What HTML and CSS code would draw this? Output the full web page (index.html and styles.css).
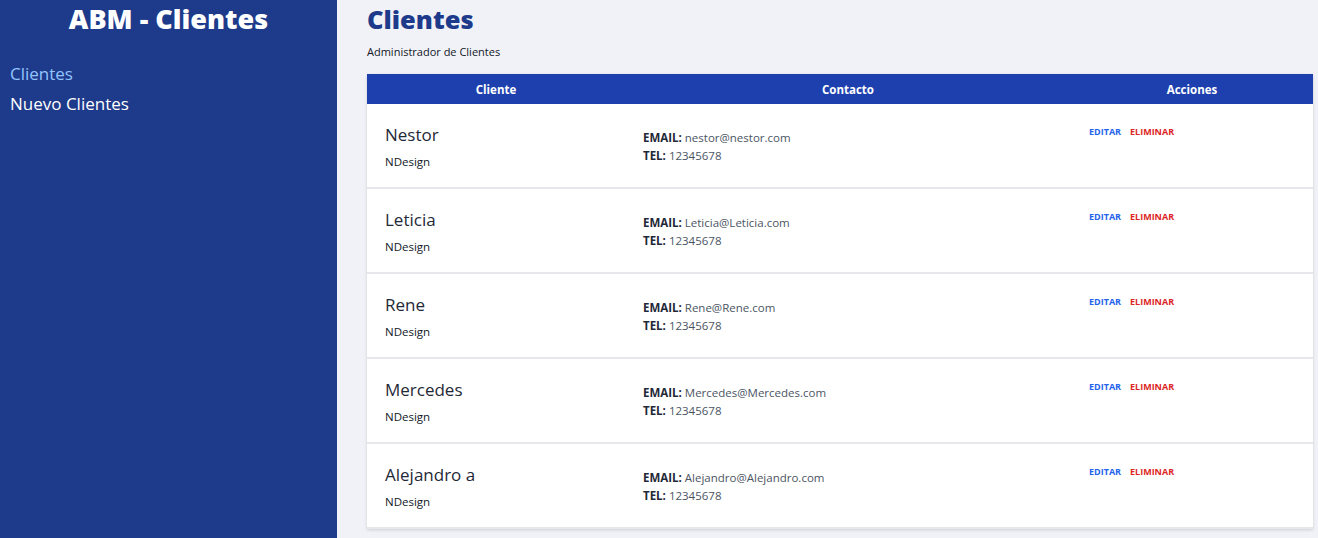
FILE: index.html
```html
<!DOCTYPE html>
<html lang="es">
<head>
<meta charset="utf-8">
<title>ABM - Clientes</title>
<link rel="stylesheet" href="styles.css">
</head>
<body>
<div class="layout">
  <aside class="sidebar">
    <h2 class="brand">ABM - Clientes</h2>
    <nav class="nav">
      <a class="nav-link active" href="#">Clientes</a>
      <a class="nav-link" href="#">Nuevo Clientes</a>
    </nav>
  </aside>
  <main class="main">
    <h1 class="title">Clientes</h1>
    <p class="subtitle">Administrador de Clientes</p>
    <table class="table">
      <thead>
        <tr><th class="c1">Cliente</th><th class="c2">Contacto</th><th class="c3">Acciones</th></tr>
      </thead>
      <tbody>
        <tr>
          <td><p class="name">Nestor</p><p class="company">NDesign</p></td>
          <td><p class="line"><b>EMAIL:</b> nestor@nestor.com</p><p class="line"><b>TEL:</b> 12345678</p></td>
          <td><div class="actions"><a class="act edit" href="#">EDITAR</a><a class="act del" href="#">ELIMINAR</a></div></td>
        </tr>
        <tr>
          <td><p class="name">Leticia</p><p class="company">NDesign</p></td>
          <td><p class="line"><b>EMAIL:</b> Leticia@Leticia.com</p><p class="line"><b>TEL:</b> 12345678</p></td>
          <td><div class="actions"><a class="act edit" href="#">EDITAR</a><a class="act del" href="#">ELIMINAR</a></div></td>
        </tr>
        <tr>
          <td><p class="name">Rene</p><p class="company">NDesign</p></td>
          <td><p class="line"><b>EMAIL:</b> Rene@Rene.com</p><p class="line"><b>TEL:</b> 12345678</p></td>
          <td><div class="actions"><a class="act edit" href="#">EDITAR</a><a class="act del" href="#">ELIMINAR</a></div></td>
        </tr>
        <tr>
          <td><p class="name">Mercedes</p><p class="company">NDesign</p></td>
          <td><p class="line"><b>EMAIL:</b> Mercedes@Mercedes.com</p><p class="line"><b>TEL:</b> 12345678</p></td>
          <td><div class="actions"><a class="act edit" href="#">EDITAR</a><a class="act del" href="#">ELIMINAR</a></div></td>
        </tr>
        <tr>
          <td><p class="name">Alejandro a</p><p class="company">NDesign</p></td>
          <td><p class="line"><b>EMAIL:</b> Alejandro@Alejandro.com</p><p class="line"><b>TEL:</b> 12345678</p></td>
          <td><div class="actions"><a class="act edit" href="#">EDITAR</a><a class="act del" href="#">ELIMINAR</a></div></td>
        </tr>
      </tbody>
    </table>
  </main>
</div>
</body>
</html>
```
FILE: styles.css
```css
* { box-sizing: border-box; }
html, body { margin: 0; padding: 0; height: 100%; }
body {
  font-family: "Open Sans", "Noto Sans", sans-serif;
  color: #111827;
  background: #f1f2f7;
  overflow: hidden;
}
.layout { display: flex; min-height: 538px; }
.sidebar {
  width: 337px;
  flex: none;
  background: #1e3a8a;
  min-height: 538px;
  padding: 0 10px;
}
.brand {
  margin: 0;
  padding-top: 3px;
  text-align: center;
  color: #fff;
  font-family: "Open Sans", sans-serif;
  font-weight: 800;
  font-size: 27px;
  line-height: 32px;
}
.nav { display: flex; flex-direction: column; margin-top: 24px; }
.nav-link {
  color: #fff;
  text-decoration: none;
  font-size: 17px;
  line-height: 30px;
}
.nav-link.active { color: #93c5fd; }
.main { flex: 1; padding: 0 5px 0 30px; }
.title {
  margin: 0;
  padding-top: 3px;
  font-family: "Open Sans", sans-serif;
  font-weight: 800;
  font-size: 25.5px;
  line-height: 32px;
  color: #1e3a8a;
}
.subtitle { margin: 9px 0 0; font-size: 11px; line-height: 16px; }
.table {
  margin-top: 14px;
  width: 100%;
  border-collapse: collapse;
  background: #fff;
  box-shadow: 0 1px 3px rgba(0,0,0,0.15);
}
.table th {
  background: #1e40af;
  color: #fff;
  font-size: 11.5px;
  font-weight: 700;
  height: 30px;
  padding: 0;
}
.c1 { width: 258px; }
.c2 { width: 446px; }
.table td {
  vertical-align: top;
  padding: 20px 18px 17px;
  border-bottom: 2px solid #e5e7eb;
  line-height: 16px;
}
.name { margin: 0; font-size: 17px; line-height: 22px; color: #1f2937; }
.company { margin: 8px 0 0; font-size: 11.5px; line-height: 16px; }
.line { margin: 0; font-size: 11.5px; line-height: 18px; color: #4b5563; }
.line:first-child { margin-top: 5px; }
.line b { color: #1f2937; font-weight: 700; }
.actions { display: flex; gap: 9px; padding-top: 1px; }
.act {
  font-size: 9px;
  font-weight: 700;
  line-height: 14px;
  text-decoration: none;
}
.edit { color: #2563eb; }
.del { color: #dc2626; }
```
